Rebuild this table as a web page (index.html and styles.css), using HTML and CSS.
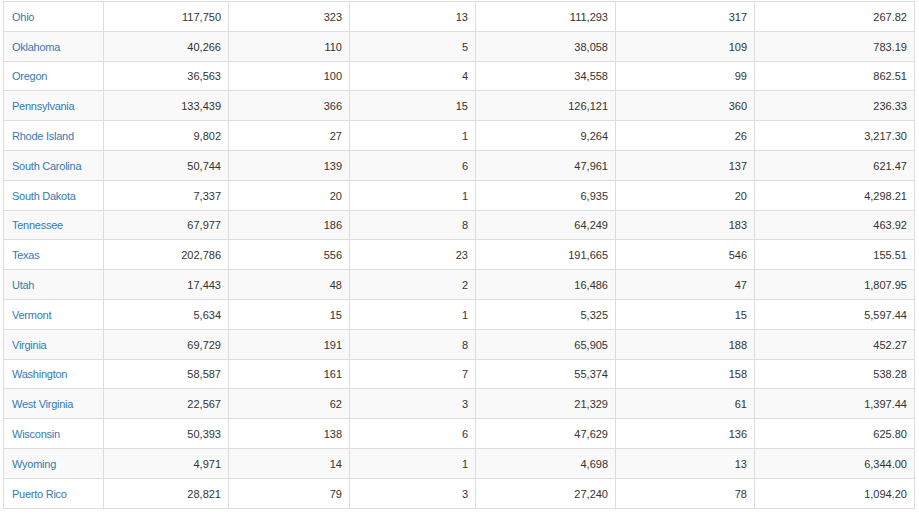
FILE: index.html
```html
<!DOCTYPE html>
<html>
<head>
<meta charset="utf-8">
<link rel="stylesheet" href="styles.css">
</head>
<body>
<div class="wrap">
<table class="grid">
<colgroup>
<col class="c1"><col class="c2"><col class="c3"><col class="c4"><col class="c5"><col class="c6"><col class="c7">
</colgroup>
<tbody>
<tr><td><a href="#">Ohio</a></td><td>117,750</td><td>323</td><td>13</td><td>111,293</td><td>317</td><td>267.82</td></tr>
<tr><td><a href="#">Oklahoma</a></td><td>40,266</td><td>110</td><td>5</td><td>38,058</td><td>109</td><td>783.19</td></tr>
<tr><td><a href="#">Oregon</a></td><td>36,563</td><td>100</td><td>4</td><td>34,558</td><td>99</td><td>862.51</td></tr>
<tr><td><a href="#">Pennsylvania</a></td><td>133,439</td><td>366</td><td>15</td><td>126,121</td><td>360</td><td>236.33</td></tr>
<tr><td><a href="#">Rhode Island</a></td><td>9,802</td><td>27</td><td>1</td><td>9,264</td><td>26</td><td>3,217.30</td></tr>
<tr><td><a href="#">South Carolina</a></td><td>50,744</td><td>139</td><td>6</td><td>47,961</td><td>137</td><td>621.47</td></tr>
<tr><td><a href="#">South Dakota</a></td><td>7,337</td><td>20</td><td>1</td><td>6,935</td><td>20</td><td>4,298.21</td></tr>
<tr><td><a href="#">Tennessee</a></td><td>67,977</td><td>186</td><td>8</td><td>64,249</td><td>183</td><td>463.92</td></tr>
<tr><td><a href="#">Texas</a></td><td>202,786</td><td>556</td><td>23</td><td>191,665</td><td>546</td><td>155.51</td></tr>
<tr><td><a href="#">Utah</a></td><td>17,443</td><td>48</td><td>2</td><td>16,486</td><td>47</td><td>1,807.95</td></tr>
<tr><td><a href="#">Vermont</a></td><td>5,634</td><td>15</td><td>1</td><td>5,325</td><td>15</td><td>5,597.44</td></tr>
<tr><td><a href="#">Virginia</a></td><td>69,729</td><td>191</td><td>8</td><td>65,905</td><td>188</td><td>452.27</td></tr>
<tr><td><a href="#">Washington</a></td><td>58,587</td><td>161</td><td>7</td><td>55,374</td><td>158</td><td>538.28</td></tr>
<tr><td><a href="#">West Virginia</a></td><td>22,567</td><td>62</td><td>3</td><td>21,329</td><td>61</td><td>1,397.44</td></tr>
<tr><td><a href="#">Wisconsin</a></td><td>50,393</td><td>138</td><td>6</td><td>47,629</td><td>136</td><td>625.80</td></tr>
<tr><td><a href="#">Wyoming</a></td><td>4,971</td><td>14</td><td>1</td><td>4,698</td><td>13</td><td>6,344.00</td></tr>
<tr><td><a href="#">Puerto Rico</a></td><td>28,821</td><td>79</td><td>3</td><td>27,240</td><td>78</td><td>1,094.20</td></tr>
</tbody>
</table>
</div>
</body>
</html>
```

FILE: styles.css
```css
html, body {
  margin: 0;
  padding: 0;
  background: #fff;
}
.wrap {
  padding: 1px 5px 0 3px;
}
.grid {
  border-collapse: collapse;
  table-layout: fixed;
  width: 911px;
  font-family: "Liberation Sans", Arial, sans-serif;
  font-size: 11px;
  color: #333;
}
.c1 { width: 100px; }
.c2 { width: 125px; }
.c3 { width: 121px; }
.c4 { width: 126px; }
.c5 { width: 140px; }
.c6 { width: 139px; }
.c7 { width: 160px; }
.grid td {
  border: 1px solid #ddd;
  padding: 2px 7px 0 8px;
  height: 26.8px;
  line-height: 15px;
  text-align: right;
  white-space: nowrap;
}
.grid td:first-child {
  text-align: left;
}
.grid tr:nth-child(even) td {
  background: #f9f9f9;
}
.grid a {
  color: #337ab7;
  text-decoration: none;
  letter-spacing: -0.25px;
}
```
